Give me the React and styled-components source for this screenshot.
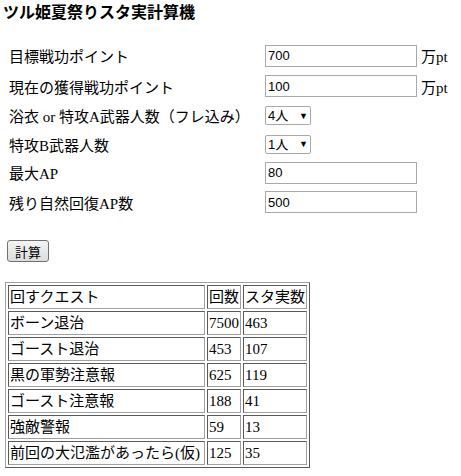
import React from 'react'
import styled, { createGlobalStyle } from 'styled-components'

const Global = createGlobalStyle`
  body {
    margin: 0;
    background: #fff;
    color: #000;
    font-family: "Liberation Serif", "Noto Sans CJK JP", serif;
  }
`

const fields = [
  { label: '目標戦功ポイント', kind: 'input', value: '700', unit: '万pt', h: 31 },
  { label: '現在の獲得戦功ポイント', kind: 'input', value: '100', unit: '万pt', h: 30 },
  { label: '浴衣 or 特攻A武器人数（フレ込み）', kind: 'select', value: '4人', h: 29 },
  { label: '特攻B武器人数', kind: 'select', value: '1人', h: 28 },
  { label: '最大AP', kind: 'input', value: '80', h: 29 },
  { label: '残り自然回復AP数', kind: 'input', value: '500', h: 30 },
]

const results = [
  ['ボーン退治', '7500', '463'],
  ['ゴースト退治', '453', '107'],
  ['黒の軍勢注意報', '625', '119'],
  ['ゴースト注意報', '188', '41'],
  ['強敵警報', '59', '13'],
  ['前回の大氾濫があったら(仮)', '125', '35'],
]

export default function App() {
  return (
    <Page>
      <Global />
      <Title>ツル姫夏祭りスタ実計算機</Title>
      <Form>
        {fields.map(f => (
          <Row key={f.label} $h={f.h}>
            <Label>{f.label}</Label>
            {f.kind === 'input' ? (
              <TextInput defaultValue={f.value} />
            ) : (
              <SelectBox>
                <Select defaultValue={f.value}>
                  {['1人', '2人', '3人', '4人'].map(o => <option key={o}>{o}</option>)}
                </Select>
                <Arrow>▼</Arrow>
              </SelectBox>
            )}
            {f.unit && <Unit>{f.unit}</Unit>}
          </Row>
        ))}
      </Form>
      <Button>計算</Button>
      <Table>
        <colgroup>
          <col style={{ width: 197 }} />
          <col style={{ width: 34 }} />
          <col style={{ width: 63 }} />
        </colgroup>
        <tbody>
          <tr>
            <Cell>回すクエスト</Cell>
            <Cell>回数</Cell>
            <Cell>スタ実数</Cell>
          </tr>
          {results.map(r => (
            <tr key={r[0]}>
              {r.map((c, i) => <Cell key={i}>{c}</Cell>)}
            </tr>
          ))}
        </tbody>
      </Table>
    </Page>
  )
}

const Page = styled.div`
  padding: 0 0 0 3px;
  display: flex;
  flex-direction: column;
  align-items: flex-start;
`

const Title = styled.h1`
  margin: 0;
  font-family: "Noto Sans CJK JP", sans-serif;
  font-size: 16px;
  font-weight: bold;
  line-height: 22px;
`

const Form = styled.div`
  margin-top: 18px;
  padding-left: 6px;
  display: flex;
  flex-direction: column;
`

const Row = styled.div`
  display: flex;
  align-items: center;
  height: ${p => p.$h}px;
`

const Label = styled.span`
  width: 256px;
  font-size: 15px;
  white-space: nowrap;
`

const TextInput = styled.input`
  box-sizing: border-box;
  width: 152px;
  height: 22px;
  margin: 0;
  padding: 0 2px;
  border: 1px solid #a9a9a9;
  font-family: "Liberation Sans", "Noto Sans CJK JP", sans-serif;
  font-size: 13px;
  color: #000;
  outline: none;
`

const SelectBox = styled.label`
  box-sizing: border-box;
  width: 46px;
  height: 19px;
  border: 1px solid #a9a9a9;
  border-radius: 2px;
  display: flex;
  align-items: center;
  padding: 0 0 0 2px;
  background: #fff;
`

const Select = styled.select`
  appearance: none;
  border: none;
  background: transparent;
  margin: 0;
  padding: 0;
  width: 29px;
  font-family: "Liberation Sans", "Noto Sans CJK JP", sans-serif;
  font-size: 13px;
  color: #000;
  outline: none;
`

const Arrow = styled.span`
  font-size: 9px;
  margin-left: 2px;
  color: #000;
`

const Unit = styled.span`
  margin-left: 4px;
  font-size: 15px;
`

const Button = styled.button`
  margin: 23px 0 0 4px;
  box-sizing: border-box;
  width: 42px;
  height: 22px;
  padding: 0;
  border: 1px solid #707070;
  border-radius: 3px;
  background: linear-gradient(#f4f4f4, #dcdcdc);
  font-family: "Noto Sans CJK JP", sans-serif;
  font-size: 13px;
  color: #000;
`

const Table = styled.table`
  margin: 20px 0 0 2px;
  border-collapse: separate;
  border-spacing: 2px;
  table-layout: fixed;
  border: 1px solid;
  border-color: #a0a0a0 #5a5a5a #5a5a5a #a0a0a0;
  font-size: 15px;
`

const Cell = styled.td`
  height: 22px;
  padding: 0 1px;
  border: 1px solid;
  border-color: #5a5a5a #a0a0a0 #a0a0a0 #5a5a5a;
  line-height: 22px;
  white-space: nowrap;
  overflow: hidden;
  text-align: left;
`
